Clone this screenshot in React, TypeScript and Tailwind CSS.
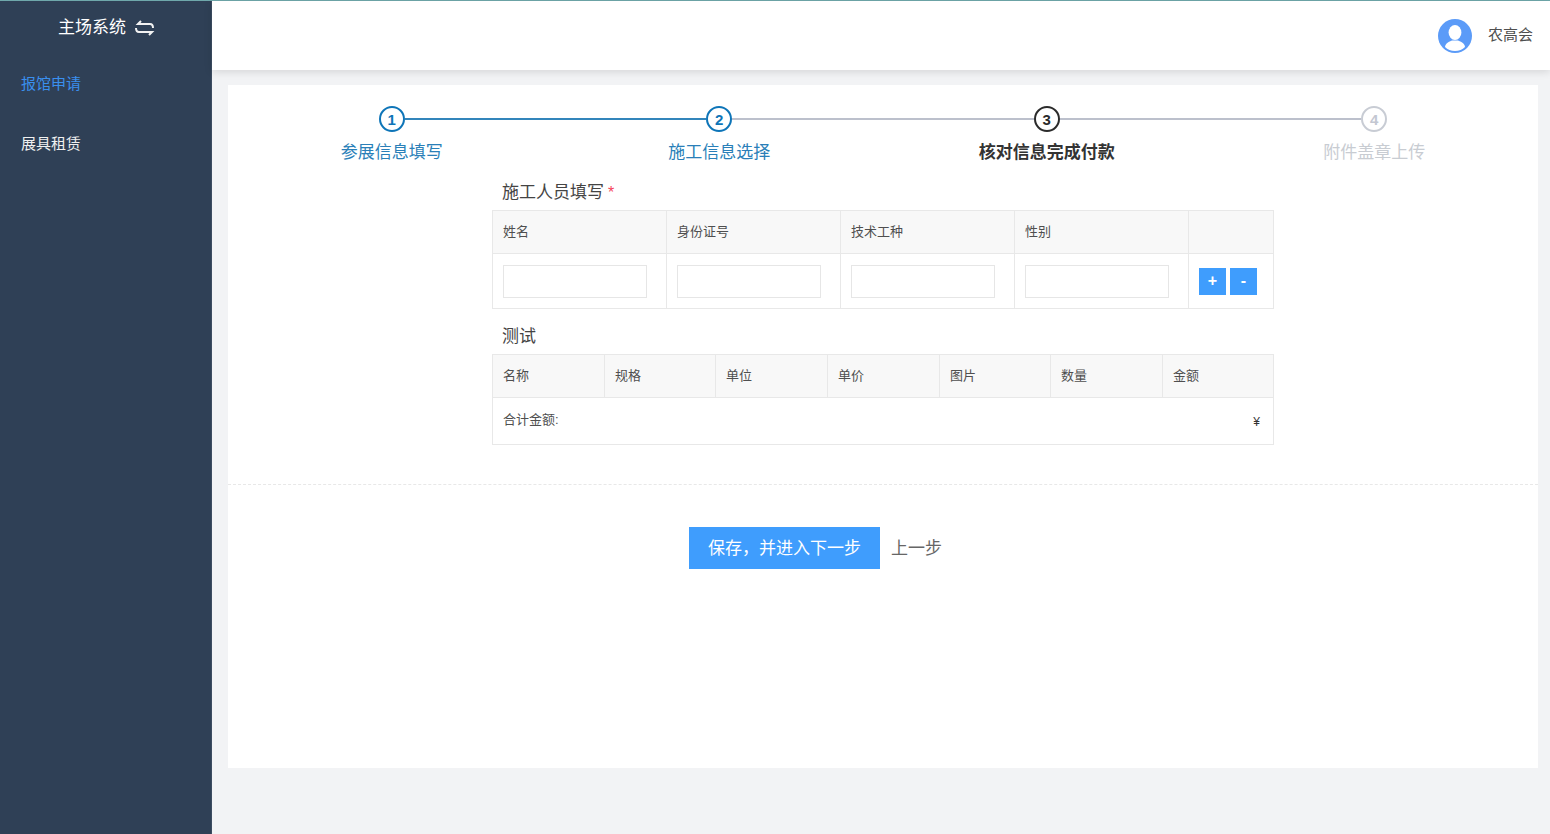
import React from "react";

const font = { fontFamily: '"Liberation Sans", "Noto Sans CJK SC", sans-serif' };

type Step = { n: number; label: string; circle: string; text: string; left: string; right: string };

const steps: Step[] = [
  { n: 1, label: "参展信息填写", circle: "border-[#0e75b8] text-[#0e75b8]", text: "text-[#2a7fb8]", left: "bg-transparent", right: "bg-[#3385bb]" },
  { n: 2, label: "施工信息选择", circle: "border-[#0e75b8] text-[#0e75b8]", text: "text-[#2a7fb8]", left: "bg-[#3385bb]", right: "bg-[#bcc0cc]" },
  { n: 3, label: "核对信息完成付款", circle: "border-[#2b2b2b] text-[#2b2b2b]", text: "text-[#333333] font-bold", left: "bg-[#bcc0cc]", right: "bg-[#bcc0cc]" },
  { n: 4, label: "附件盖章上传", circle: "border-[#c8ccd4] text-[#c3c7d2]", text: "text-[#c8ccd2]", left: "bg-[#bcc0cc]", right: "bg-transparent" },
];

const testCols: { t: string; w: string }[] = [
  { t: "名称", w: "w-[112px]" },
  { t: "规格", w: "w-[111px]" },
  { t: "单位", w: "w-[112px]" },
  { t: "单价", w: "w-[112px]" },
  { t: "图片", w: "w-[111px]" },
  { t: "数量", w: "w-[112px]" },
  { t: "金额", w: "flex-1" },
];

function StepItem({ s }: { s: Step }) {
  return (
    <div className="flex-1 flex flex-col items-center">
      <div className="w-full flex items-center">
        <div className={`flex-1 h-[2px] ${s.left}`} />
        <div className={`w-[26px] h-[26px] shrink-0 rounded-full border-2 flex items-center justify-center text-[15px] font-bold leading-none ${s.circle}`}>
          {s.n}
        </div>
        <div className={`flex-1 h-[2px] ${s.right}`} />
      </div>
      <div className={`mt-[9px] text-[17px] leading-[24px] ${s.text}`}>{s.label}</div>
    </div>
  );
}

function HeadCell({ children, w }: { children?: React.ReactNode; w: string }) {
  return (
    <div className={`${w} shrink-0 h-[42px] flex items-center px-[10px] border-r border-[#e8e8e8] last:border-r-0 text-[13px] text-[#4f4f4f]`}>
      {children}
    </div>
  );
}

function InputCell() {
  return (
    <div className="w-[174px] shrink-0 h-[54px] flex items-center px-[10px] border-r border-[#e8e8e8]">
      <div className="w-[144px] h-[33px] border border-[#e6e6e6] bg-white" />
    </div>
  );
}

export default function App() {
  return (
    <div style={font} className="w-[1550px] h-[834px] overflow-hidden flex flex-col bg-[#f2f3f5]">
      <div className="h-px bg-[#6fa8ab] shrink-0" />
      <div className="flex flex-1 min-h-0">
        <aside className="w-[212px] shrink-0 bg-[#2f4056] border-r border-[#3d4d62]">
          <div className="h-[53px] pl-[58px] flex items-center text-[17px] text-white">
            <span>主场系统</span>
            <svg className="ml-[9px]" width="20" height="16" viewBox="0 0 20 16" fill="none" stroke="#f2f2f2" strokeWidth="2">
              <path d="M6 1 L3 4 H15 Q18 4 18 8" />
              <path d="M1 8 Q1 12 4 12 H17 L14 15" />
            </svg>
          </div>
          <div className="h-[60px] pl-[21px] flex items-center text-[15px] text-[#3a8fee]">报馆申请</div>
          <div className="h-[59px] mt-px pl-[21px] flex items-center text-[15px] text-[#f0f0f0]">展具租赁</div>
        </aside>
        <div className="flex-1 min-w-0 flex flex-col">
          <header className="h-[69px] shrink-0 bg-white shadow-[0_2px_8px_rgba(0,0,0,0.12)] flex items-center justify-end pr-[17px]">
            <svg width="34" height="34" viewBox="0 0 34 34">
              <circle cx="17" cy="17" r="17" fill="#5b9bf8" />
              <ellipse cx="17" cy="13.5" rx="6.4" ry="7.6" fill="#fff" />
              <path d="M7 28 C7.5 24 11 22.5 14 21.5 L20 21.5 C23 22.5 26.5 24 27 28 C24.5 30.5 21 32 17 32 C13 32 9.5 30.5 7 28 Z" fill="#fff" />
            </svg>
            <span className="ml-[16px] text-[15px] text-[#4f4f4f]">农高会</span>
          </header>
          <main className="flex-1 min-h-0 pt-[15px] pl-[16px] pr-[12px]">
            <div className="w-[1310px] h-[683px] bg-white flex flex-col">
              <div className="flex pt-[21px]">
                {steps.map((s) => (
                  <StepItem key={s.n} s={s} />
                ))}
              </div>
              <div className="ml-[264px] w-[782px]">
                <div className="h-[27px] mt-[14px] pl-[10px] flex items-center text-[17px] text-[#444444] leading-none">
                  施工人员填写<span className="ml-[4px] text-[16px] text-[#f5455c]">*</span>
                </div>
                <div className="mt-[4px] border border-[#e8e8e8]">
                  <div className="flex bg-[#f8f8f8] border-b border-[#e8e8e8]">
                    <HeadCell w="w-[174px]">姓名</HeadCell>
                    <HeadCell w="w-[174px]">身份证号</HeadCell>
                    <HeadCell w="w-[174px]">技术工种</HeadCell>
                    <HeadCell w="w-[174px]">性别</HeadCell>
                    <HeadCell w="flex-1" />
                  </div>
                  <div className="flex">
                    <InputCell />
                    <InputCell />
                    <InputCell />
                    <InputCell />
                    <div className="flex-1 flex items-center pl-[10px] gap-[4px]">
                      <div className="w-[27px] h-[27px] bg-[#3f9dfd] text-white text-[16px] font-bold flex items-center justify-center">+</div>
                      <div className="w-[27px] h-[27px] bg-[#3f9dfd] text-white text-[16px] font-bold flex items-center justify-center">-</div>
                    </div>
                  </div>
                </div>
                <div className="h-[27px] mt-[14px] pl-[10px] flex items-center text-[17px] text-[#444444] leading-none">测试</div>
                <div className="mt-[4px] border border-[#e8e8e8]">
                  <div className="flex bg-[#f8f8f8] border-b border-[#e8e8e8]">
                    {testCols.map((c) => (
                      <HeadCell key={c.t} w={c.w}>
                        {c.t}
                      </HeadCell>
                    ))}
                  </div>
                  <div className="h-[46px] flex justify-between pl-[10px] pr-[13px] text-[13px] text-[#4f4f4f]">
                    <span className="mt-[12px]">合计金额:</span>
                    <span className="mt-[15px] text-[#333333] text-[12px]">¥</span>
                  </div>
                </div>
              </div>
              <div className="mt-[39px] border-t border-dashed border-[#e8e8e8] flex items-center pl-[461px] pt-[42px]">
                <div className="w-[191px] h-[42px] pt-[2px] bg-[#3f9dfd] text-white text-[17px] flex items-center justify-center">保存，并进入下一步</div>
                <span className="ml-[11px] mt-[2px] text-[17px] text-[#666666]">上一步</span>
              </div>
            </div>
          </main>
        </div>
      </div>
    </div>
  );
}
